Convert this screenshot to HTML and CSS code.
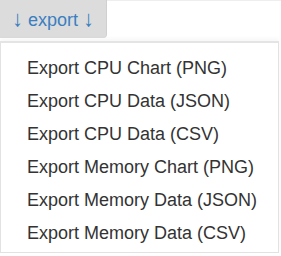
FILE: index.html
```html
<!DOCTYPE html>
<html lang="en">
<head>
    <meta charset="UTF-8">
    <title>Export</title>
    <link rel="stylesheet" href="styles.css">
</head>
<body>
    <div class="export-wrap">
        <button class="export-button"><span class="arrow">↓</span> export <span class="arrow">↓</span></button>
        <ul class="export-menu">
            <li><a href="#">Export CPU Chart (PNG)</a></li>
            <li><a href="#">Export CPU Data (JSON)</a></li>
            <li><a href="#">Export CPU Data (CSV)</a></li>
            <li><a href="#">Export Memory Chart (PNG)</a></li>
            <li><a href="#">Export Memory Data (JSON)</a></li>
            <li><a href="#">Export Memory Data (CSV)</a></li>
        </ul>
    </div>
</body>
</html>
```

FILE: styles.css
```css
body {
    margin: 0;
    font-family: "Liberation Sans", Arial, sans-serif;
    background-color: #fff;
}

.export-wrap {
    display: flex;
    flex-direction: column;
    align-items: flex-start;
    border-top: 1px solid #eee;
}

.export-button {
    width: 107px;
    height: 38px;
    margin-top: -1px;
    padding: 0;
    border: none;
    border-right: 1px solid #d0d0d0;
    border-radius: 0 0 4px 0;
    background-color: #dcdcdc;
    color: #3a7fc1;
    font-family: inherit;
    font-size: 18px;
    line-height: 20px;
    cursor: pointer;
}

.export-button .arrow {
    font-size: 22px;
    line-height: 20px;
}

.export-menu {
    list-style: none;
    margin: 3px 0 0 0;
    padding: 9px 0 6px 0;
    width: 279px;
    height: 212px;
    box-sizing: border-box;
    border: 1px solid #e2e2e2;
    border-top: 2px solid #e4e4e4;
    box-shadow: 0 -3px 4px rgba(0, 0, 0, 0.03);
    display: flex;
    flex-direction: column;
}

.export-menu a {
    display: block;
    padding: 6px 0 6px 26px;
    font-size: 18px;
    line-height: 21px;
    color: #333;
    text-decoration: none;
}

.export-menu a:hover {
    background-color: #f5f5f5;
}
```
